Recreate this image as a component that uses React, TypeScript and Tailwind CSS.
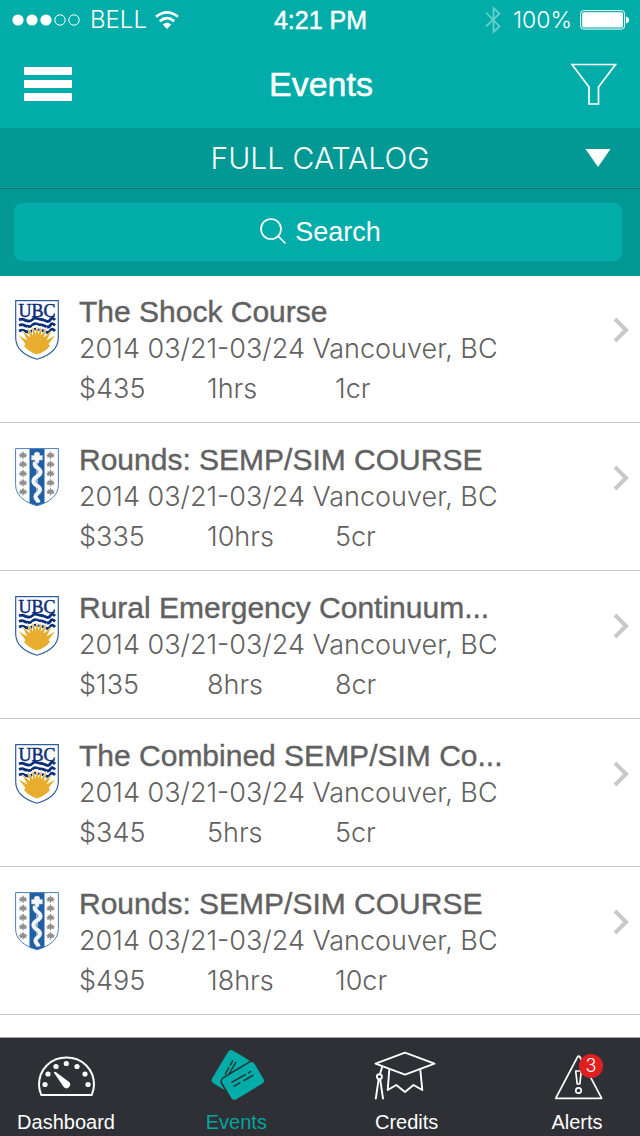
type CrestName = "ubc" | "staff";

interface CourseEvent {
  title: string;
  when: string;
  price: string;
  hours: string;
  credits: string;
  crest: CrestName;
}

const place = "2014 03/21-03/24 Vancouver, BC";

const events: CourseEvent[] = [
  { title: "The Shock Course", when: place, price: "$435", hours: "1hrs", credits: "1cr", crest: "ubc" },
  { title: "Rounds: SEMP/SIM COURSE", when: place, price: "$335", hours: "10hrs", credits: "5cr", crest: "staff" },
  { title: "Rural Emergency Continuum...", when: place, price: "$135", hours: "8hrs", credits: "8cr", crest: "ubc" },
  { title: "The Combined SEMP/SIM Co...", when: place, price: "$345", hours: "5hrs", credits: "5cr", crest: "ubc" },
  { title: "Rounds: SEMP/SIM COURSE", when: place, price: "$495", hours: "18hrs", credits: "10cr", crest: "staff" },
];

function UbcCrest() {
  return (
    <svg viewBox="0 0 44 60" className="h-[60px] w-11" aria-hidden="true">
      <path d="M.7.7h42.6v37c0 10-8 17.500-21.300 21.600C8.700 55.200.7 47.700.7 37.700z" fill="#fff" stroke="#2f5f9e" strokeWidth="1.200" />
      <text x="22" y="16.700" textAnchor="middle" fontSize="18" fill="#0b2f78" stroke="#0b2f78" strokeWidth=".5" className="font-['Liberation_Serif',serif]">UBC</text>
      <g fill="none" stroke="#0b2f78" strokeWidth="2.800">
        <path d="M4 20q3-1.500 4.500-.5t4.500 1.500 4.500-1.500 4.500-1 4.500 1 4.500 1.500 4.500-1.500 4.500.5" />
        <path d="M4 25.500q3-1.500 4.500-.5t4.500 1.500 4.500-1.500 4.500-1 4.500 1 4.500 1.500 4.500-1.500 4.500.5" />
        <path d="M4 31q3-1.500 4.500-.5t4.500 1.500 4.500-1.500 4.500-1 4.500 1 4.500 1.500 4.500-1.500 4.500.5" />
      </g>
      <path
        d="M9 46l1.500-2L4 35.500l8.500 5-5-9.500 7.800 6.500L12.500 27.500l5.500 8-.5-9.500 3.200 8.500L22 25l1.300 9.500L26.500 26l-.5 9.500 5.500-8-2.800 10 7.800-6.500-5 9.500 8.500-5-6.500 8.500L35 46Q30 52 22 54.500 14 52 9 46z"
        fill="#e8ad2e"
        stroke="#fff"
        strokeWidth="1"
        paintOrder="stroke"
      />
    </svg>
  );
}

const leafRows = [7, 16, 25.300, 34.500, 43.500];

function StaffCrest() {
  return (
    <svg viewBox="0 0 44 60" className="h-[60px] w-11" aria-hidden="true">
      <path d="M.6.600h42.800v36c0 10.500-8 17.400-21.400 21.100C8.600 54 .6 47.100.6 36.600z" fill="#fff" />
      <path d="M14.500.6h15v54.600Q26 57 22 57.700 18 57 14.500 55.200z" fill="#1f5fa8" />
      <path d="M.6.600h42.800v36c0 10.500-8 17.400-21.400 21.100C8.600 54 .6 47.100.6 36.600z" fill="none" stroke="#4a7fb8" strokeWidth="1" />
      {[8, 35.500].map((x) =>
        leafRows.map((y) => (
          <path
            key={`${x}-${y}`}
            transform={`translate(${x} ${y})`}
            d="M0-4l1.200 2.500L3-2.200 2.500-.2l2-.4L3 1.500l.7 1L.6 2.300V4h-1.200V2.300l-3.100.2.7-1-1.500-2.100 2 .4L-3-2.200l1.800.7z"
            fill="#8f8f8f"
          />
        )),
      )}
      <path d="M22 10v45" stroke="#c3d0de" strokeWidth="1.600" />
      <path d="M20 14c-2 6 5.500 5.500 5.500 10s-7 4.500-7 9 6.500 4.500 6.500 8.500-4.500 4-4.500 7 2.500 3 3 6" fill="none" stroke="#5f85b0" strokeWidth="4.900" />
      <path d="M20 14c-2 6 5.500 5.500 5.500 10s-7 4.500-7 9 6.500 4.500 6.500 8.500-4.500 4-4.500 7 2.500 3 3 6" fill="none" stroke="#f4f6f8" strokeWidth="3.900" />
      <path d="M16.500 7.500h2.700q-.6-3.500 2.800-3.500t2.800 3.500h2.700v4.500h-3.300l-.5 3h-3.400l-.5-3h-3.300z" fill="#f4f6f8" stroke="#b9c6d5" strokeWidth=".5" />
    </svg>
  );
}

function Chevron() {
  return (
    <svg viewBox="0 0 16 26" className="h-[26px] w-4" fill="none" stroke="#c7c7cc" strokeWidth="4" aria-hidden="true">
      <path d="M2 2l11 11L2 24" />
    </svg>
  );
}

function StatusBar() {
  return (
    <div className="grid h-10 grid-cols-[1fr_auto_1fr] items-center pr-[11px] pl-3">
      <div className="flex items-center gap-2">
        <svg viewBox="0 0 70 12" className="h-3 w-[70px]" aria-hidden="true">
          <g fill="#fff">
            <circle cx="6" cy="6" r="5.600" />
            <circle cx="20" cy="6" r="5.600" />
            <circle cx="34" cy="6" r="5.600" />
          </g>
          <g fill="none" stroke="#fff">
            <circle cx="48" cy="6" r="5.200" />
            <circle cx="62" cy="6" r="5.200" />
          </g>
        </svg>
        <span className="font-['Inter',sans-serif] text-[24px] leading-7 font-light">BELL</span>
        <svg viewBox="0 0 24 18" className="h-[18px] w-6" aria-hidden="true">
          <g fill="none" stroke="#fff" strokeWidth="2.700">
            <path d="M1 5.800Q12-3 23 5.800" />
            <path d="M4.800 10.200Q12 4.200 19.200 10.200" />
          </g>
          <path d="M7.800 13.600Q12 10 16.200 13.600L12 18z" fill="#fff" />
        </svg>
      </div>
      <span className="text-[25px] leading-7 [-webkit-text-stroke:0.5px_currentColor]">4:21 PM</span>
      <div className="flex items-center justify-end">
        <svg viewBox="0 0 16 28" className="mr-3 h-7 w-4" fill="none" stroke="#66cecb" strokeWidth="1.800" aria-hidden="true">
          <path d="M1 6.500l13.500 14L8.500 26V2l6 5.500L1 20.500" />
        </svg>
        <span className="mr-2 font-['Inter',sans-serif] text-[23px] leading-7 font-light">100%</span>
        <svg viewBox="0 0 49 20" className="h-5 w-[49px]" aria-hidden="true">
          <rect x=".6" y=".6" width="44" height="18.500" rx="3" fill="none" stroke="#fff" />
          <rect x="2.200" y="2.200" width="40.800" height="15.300" rx="1.500" fill="#fff" />
          <path d="M46 6.500q3 .8 3 3.400t-3 3.400z" fill="#fff" />
        </svg>
      </div>
    </div>
  );
}

function TitleBar() {
  return (
    <div className="grid h-[88px] grid-cols-[1fr_auto_1fr] items-center pr-[22px] pl-6">
      <button type="button" aria-label="Menu" className="flex w-12 flex-col gap-[5px]">
        <span className="h-2 bg-white" />
        <span className="h-2 bg-white" />
        <span className="h-2 bg-white" />
      </button>
      <h1 className="text-[34px] leading-10 [-webkit-text-stroke:0.5px_currentColor]">Events</h1>
      <button type="button" aria-label="Filter" className="justify-self-end">
        <svg viewBox="0 0 48 42" className="h-[42px] w-12" fill="none" stroke="#fff" strokeWidth="1.700" aria-hidden="true">
          <path d="M2 1.500h43.500L28.500 24v17h-9.500V24z" />
        </svg>
      </button>
    </div>
  );
}

function EventRow({ event }: { event: CourseEvent }) {
  return (
    <li className="flex h-[148px] items-end border-b border-[#c8c7cc] first:h-[147px]">
      <a href="#event" className="flex w-full items-start pr-[11px] pb-[14px] pl-[15px]">
        <span className="mt-1.5 mr-5 shrink-0">{event.crest === "ubc" ? <UbcCrest /> : <StaffCrest />}</span>
        <span className="min-w-0 flex-1 text-[#616161]">
          <span className="block truncate text-[30px] leading-9 [-webkit-text-stroke:0.4px_currentColor]">{event.title}</span>
          <span className="block truncate font-['Inter',sans-serif] text-[27px] leading-[38px] font-light">{event.when}</span>
          <span className="mt-0.5 grid grid-cols-[128px_128px_1fr] font-['Inter',sans-serif] text-[27px] leading-[38px] font-light">
            <span>{event.price}</span>
            <span>{event.hours}</span>
            <span>{event.credits}</span>
          </span>
        </span>
        <span className="mt-[23px] shrink-0">
          <Chevron />
        </span>
      </a>
    </li>
  );
}

function DashboardIcon() {
  return (
    <svg viewBox="0 0 60 58" className="h-[58px] w-[60px]" aria-hidden="true">
      <path d="M5.300 47C3.500 42.500 3 40 3 37 3 21 15 9.500 30.500 9.500S58 21 58 37c0 3-.5 5.500-2.300 10z" fill="none" stroke="#fff" strokeWidth="2" />
      <g fill="#fff">
        <circle cx="9" cy="36.500" r="2.600" />
        <circle cx="12" cy="26" r="2.600" />
        <circle cx="20" cy="18.500" r="2.600" />
        <circle cx="30.300" cy="15.500" r="2.600" />
        <circle cx="41" cy="18.500" r="2.600" />
        <circle cx="49" cy="26" r="2.600" />
        <circle cx="52" cy="36.500" r="2.600" />
        <path d="M17.800 24.500q.2-1.200 2-.4l13 9.600a3.500 3.500 0 1 1-4.900 5.600z" />
      </g>
    </svg>
  );
}

function TicketsIcon() {
  return (
    <svg viewBox="0 0 60 58" className="h-[58px] w-[60px]" aria-hidden="true">
      <rect x="5.800" y="11" width="38" height="25" rx="4" transform="rotate(-59 24.800 23.500)" fill="#02ada9" />
      <g stroke="#2e3035" strokeWidth="1.500">
        <path d="M19 26.500l4-7.200M24 17.500l3-5.200M22.500 27l7.500-13" />
      </g>
      <rect x="17.500" y="20" width="39" height="26" rx="4.500" transform="rotate(-31 37 33)" fill="#02ada9" stroke="#2e3035" strokeWidth="1.600" />
      <g stroke="#2e3035" strokeWidth="1.500">
        <path d="M25.300 34.700l14.400-8.300M42 25.200l3.200-1.900M27.300 38.700l7-4M37.300 33l10-5.900" />
      </g>
    </svg>
  );
}

function CapIcon() {
  return (
    <svg viewBox="2 0 60 58" className="h-[58px] w-[60px] overflow-visible" fill="none" stroke="#fff" strokeWidth="1.900" strokeLinejoin="round" strokeLinecap="round" aria-hidden="true">
      <path d="M.5 15.700L30 4.700l29.500 11L30 26.700z" />
      <path d="M14.300 21.500L12.700 42l8.600-5 8.700 7 8.500-7 8.800 5-2-20.500" />
      <path d="M7.300 18.500L5 26" />
      <circle cx="4.400" cy="28.700" r="2.500" />
      <path d="M3.600 31.500L.8 50.500M5.200 31.500l2.800 19" />
    </svg>
  );
}

function AlertIcon() {
  return (
    <span className="relative block">
      <svg viewBox="0 0 60 58" className="h-[58px] w-[60px]" fill="none" stroke="#fff" strokeWidth="1.700" strokeLinejoin="round" aria-hidden="true">
        <path d="M8.700 50.300L30.500 9q1.200-1.800 2.400 0l21.800 41.300z" />
        <path d="M28.700 23h5.600l-1.500 13h-2.600z" />
        <circle cx="31.500" cy="42.500" r="2.700" />
      </svg>
      <span className="absolute top-1.5 left-8 flex size-6 items-center justify-center rounded-full bg-[#e02020] font-['Inter',sans-serif] text-[18px] leading-6 font-light">
        3
      </span>
    </span>
  );
}

const tabs = [
  { label: "Dashboard", Icon: DashboardIcon, active: false },
  { label: "Events", Icon: TicketsIcon, active: true },
  { label: "Credits", Icon: CapIcon, active: false },
  { label: "Alerts", Icon: AlertIcon, active: false },
];

export default function App() {
  return (
    <div className="flex min-h-screen flex-col bg-white font-['Liberation_Sans',Arial,sans-serif]">
      <header className="text-white">
        <div className="bg-[#02ada9]">
          <StatusBar />
          <TitleBar />
        </div>
        <div className="bg-[#029893]">
          <div className="grid h-[61px] items-center border-b border-[#027872]">
            <select
              aria-label="Catalog"
              className="col-start-1 row-start-1 h-full w-full appearance-none bg-transparent px-4 text-center font-['Inter',sans-serif] text-[30px] font-light [text-align-last:center]"
            >
              <option>FULL CATALOG</option>
            </select>
            <svg viewBox="0 0 26 18" className="pointer-events-none col-start-1 row-start-1 mr-[29px] h-[18px] w-[26px] justify-self-end" aria-hidden="true">
              <path d="M.5 0h25L13 18z" fill="#fff" />
            </svg>
          </div>
          <div className="pt-[14px] pr-[18px] pb-[15px] pl-[14px]">
            <label className="flex h-[58px] items-center justify-center gap-2 rounded-lg bg-[#02ada9] pl-1">
              <svg viewBox="0 0 28 28" className="size-7" fill="none" stroke="#fff" strokeWidth="1.700" aria-hidden="true">
                <circle cx="12" cy="11" r="10" />
                <path d="M19 18l7.500 7.500" />
              </svg>
              <input
                type="search"
                aria-label="Search"
                placeholder="Search"
                className="field-sizing-content bg-transparent text-[27px] outline-none placeholder:text-white"
              />
            </label>
          </div>
        </div>
      </header>

      <main className="flex-1">
        <ul>
          {events.map((event, index) => (
            <EventRow key={index} event={event} />
          ))}
        </ul>
      </main>

      <nav className="flex h-[99px] justify-between border-t border-[#a5a5a8] bg-[#2e3035] pt-[10px] pr-[14px] pl-[17px]">
        {tabs.map(({ label, Icon, active }) => (
          <a key={label} href="#tab" className={active ? "flex w-[98px] flex-col items-center text-[#02a5a0]" : "flex w-[98px] flex-col items-center text-white"}>
            <Icon />
            <span className="mt-1 text-[20px] leading-6">{label}</span>
          </a>
        ))}
      </nav>
    </div>
  );
}
